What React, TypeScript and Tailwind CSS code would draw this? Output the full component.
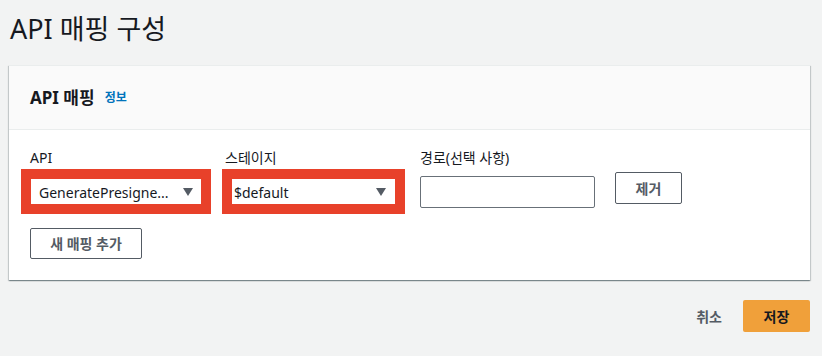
import React from 'react';

const font = { fontFamily: '"Noto Sans", "Noto Sans CJK KR", sans-serif' };

const Caret: React.FC = () => (
  <svg width="10" height="8" viewBox="0 0 10 8" className="shrink-0">
    <path d="M0 0 L10 0 L5 8 Z" fill="#545b64" />
  </svg>
);

const App: React.FC = () => {
  return (
    <div className="w-[822px] h-[356px] bg-[#f2f3f3] text-[#16191f] overflow-hidden" style={font}>
      <h1 className="pl-[10px] pt-[11px] h-[65px] text-[27px] leading-[36px] font-normal">API 매핑 구성</h1>

      <div className="ml-[9px] mr-[12px] bg-white shadow-[0_1px_1px_0_rgba(0,28,36,0.3),1px_1px_1px_0_rgba(0,28,36,0.15),-1px_1px_1px_0_rgba(0,28,36,0.15)] border-t border-[#eaeded]">
        <div className="h-[64px] bg-[#fafafa] border-b border-[#eaeded] pl-[21px] flex items-center gap-[10px]">
          <h2 className="text-[17px] font-bold leading-[22px]">API 매핑</h2>
          <a className="text-[12px] font-bold text-[#0073bb] leading-[22px] mt-[1px]">정보</a>
        </div>

        <div className="pl-[21px] pt-[18px] pb-[21px]">
          <div className="flex gap-[20px]">
            <div className="w-[175px]">
              <div className="text-[14px] leading-[20px] mb-[8px]">API</div>
              <div className="relative h-[32px]">
                <div className="h-full bg-white flex items-center justify-between pl-[9px] pr-[12px] text-[14px]">
                  <span>GeneratePresigne...</span>
                  <Caret />
                </div>
                <div className="absolute left-[-9px] top-[-7px] w-[190px] h-[45px] border-[10px] border-[#e8412a]" />
              </div>
            </div>
            <div className="w-[175px]">
              <div className="text-[14px] leading-[20px] mb-[8px]">스테이지</div>
              <div className="relative h-[32px]">
                <div className="h-full bg-white flex items-center justify-between pl-[9px] pr-[14px] text-[14px]">
                  <span>$default</span>
                  <Caret />
                </div>
                <div className="absolute left-[-3px] top-[-7px] w-[183px] h-[45px] border-[10px] border-[#e8412a]" />
              </div>
            </div>
            <div className="w-[175px]">
              <div className="text-[14px] leading-[20px] mb-[8px]">경로(선택 사항)</div>
              <input className="w-full h-[32px] border border-[#687078] rounded-[2px] bg-white" />
            </div>
            <div className="pt-[24px]">
              <button className="w-[67px] h-[32px] border border-[#545b64] rounded-[2px] text-[14px] font-bold text-[#545b64] bg-white">
                제거
              </button>
            </div>
          </div>
          <button className="mt-[20px] w-[112px] h-[31px] border border-[#545b64] rounded-[2px] text-[14px] font-bold text-[#545b64] bg-white">
            새 매핑 추가
          </button>
        </div>
      </div>

      <div className="flex justify-end items-center mr-[12px] mt-[20px] gap-[21px]">
        <button className="text-[14px] font-bold text-[#545b64]">취소</button>
        <button className="w-[67px] h-[32px] bg-[#f0a03a] rounded-[2px] text-[14px] font-bold text-[#16191f]">저장</button>
      </div>
    </div>
  );
};

export default App;
